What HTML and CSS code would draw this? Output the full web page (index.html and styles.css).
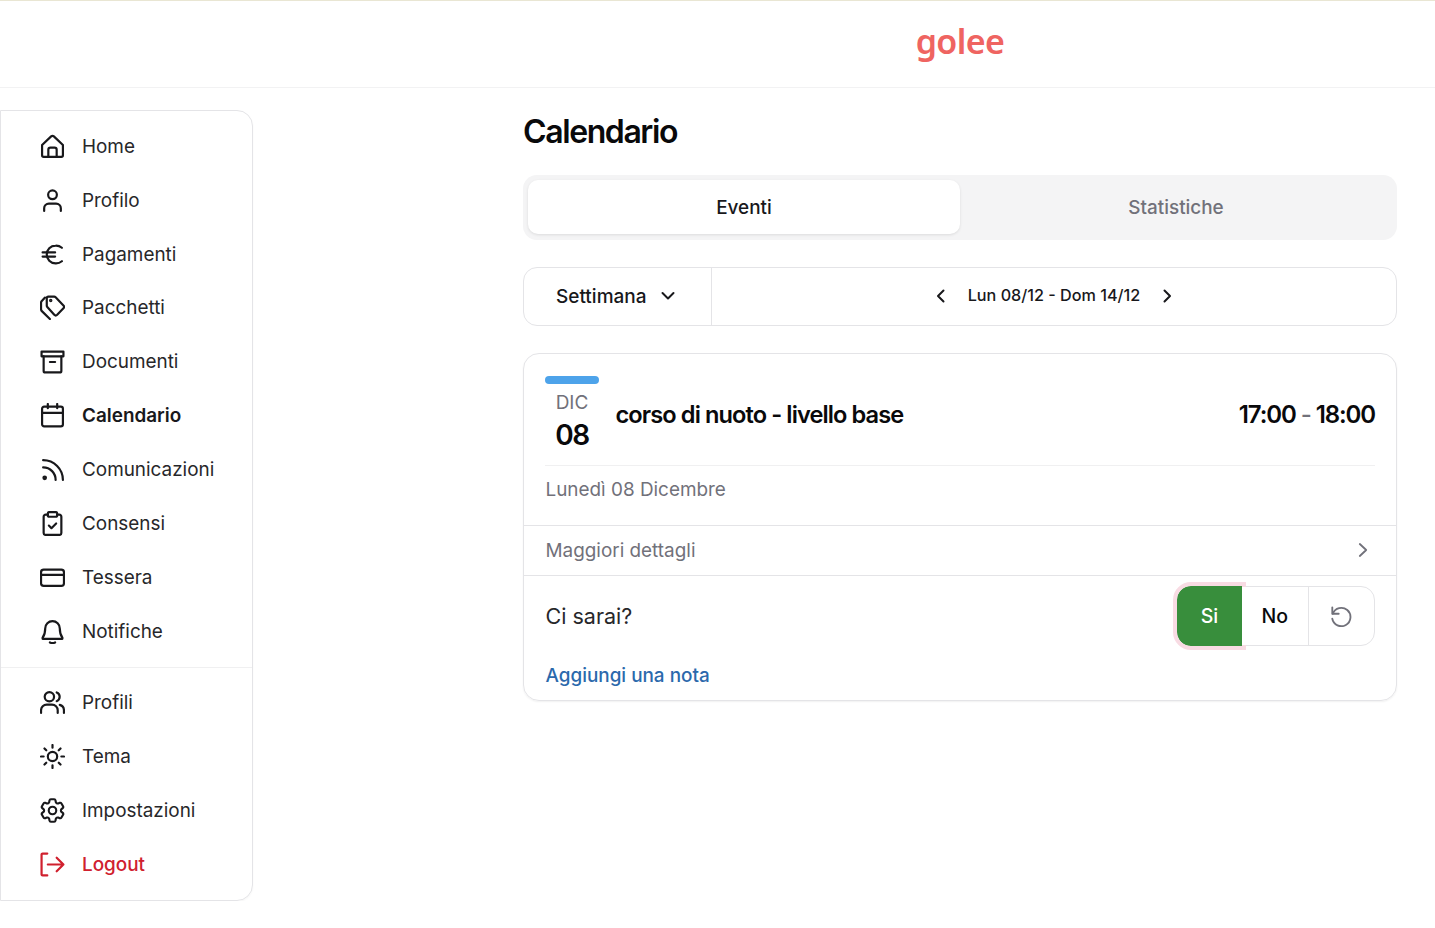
FILE: index.html
```html
<!DOCTYPE html>
<html lang="en">
<head>
    <meta charset="UTF-8">
    <meta name="viewport" content="width=device-width, initial-scale=1.0">
    <title>Calendario</title>
    <link rel="stylesheet" href="styles.css">
</head>
<body>
  <header class="topbar">
    <span class="logo">golee</span>
  </header>

  <div class="layout">
    <nav class="sidebar">
      <ul class="nav-group">
        <li class="nav-item">
          <svg class="nav-icon" viewBox="0 0 24 24"><path d="M2 10.500 10.700 2.300a2 2 0 0 1 2.600 0L22 10.500v10a1.500 1.500 0 0 1-1.500 1.500h-17A1.500 1.500 0 0 1 2 20.500z"/><path d="M8 22v-7a2 2 0 0 1 2-2h4a2 2 0 0 1 2 2v7"/></svg>
          Home
        </li>
        <li class="nav-item">
          <svg class="nav-icon" viewBox="0 0 24 24"><circle cx="12" cy="6.500" r="4.200"/><path d="M4 22v-2.500A4.500 4.500 0 0 1 8.500 15h7a4.500 4.500 0 0 1 4.500 4.500V22"/></svg>
          Profilo
        </li>
        <li class="nav-item">
          <svg class="nav-icon" viewBox="0 0 24 24"><path d="M21 5.500A9 9 0 0 0 15 3.500C10 3.500 6.500 7.500 6.500 12s3.500 8.500 8.500 8.500a9 9 0 0 0 6-2"/><path d="M2.500 10h12M2.500 14h12"/></svg>
          Pagamenti
        </li>
        <li class="nav-item">
          <svg class="nav-icon" viewBox="0 0 24 24"><path d="M6.500 3A1.500 1.500 0 0 1 8 1.500h5.500a2 2 0 0 1 1.500.6l7.500 7.900a2 2 0 0 1 0 2.800l-6 6.200a2 2 0 0 1-2.800 0L7 11.500a2 2 0 0 1-.5-1.500z"/><path d="M4.800 2.500 1.500 6A2.500 2.500 0 0 0 1 8v5.500a3 3 0 0 0 .8 2L9.500 23"/><circle class="dot" cx="10.300" cy="5.300" r=".6"/></svg>
          Pacchetti
        </li>
        <li class="nav-item">
          <svg class="nav-icon" viewBox="0 0 24 24"><path d="M1.500 2.500h21v4.500h-21z"/><path d="M3.500 7v14a1.500 1.500 0 0 0 1.500 1.500h14a1.500 1.500 0 0 0 1.500-1.500V7"/><path d="M9.500 12.500h5"/></svg>
          Documenti
        </li>
        <li class="nav-item active">
          <svg class="nav-icon" viewBox="0 0 24 24"><rect x="2" y="3.500" width="20" height="19" rx="2"/><path d="M2 9.500h20M7.500 1v4M16.500 1v4"/></svg>
          Calendario
        </li>
        <li class="nav-item">
          <svg class="nav-icon" viewBox="0 0 24 24"><path d="M3 3c10.500 0 19 8.500 19 19"/><path d="M3 10c7 0 12 5.500 12 12"/><circle cx="4.500" cy="20" r="1.200"/></svg>
          Comunicazioni
        </li>
        <li class="nav-item">
          <svg class="nav-icon" viewBox="0 0 24 24"><path d="M7.500 3.500h-2a2 2 0 0 0-2 2V21a2 2 0 0 0 2 2h13a2 2 0 0 0 2-2V5.500a2 2 0 0 0-2-2h-2"/><rect x="7.500" y="1" width="9" height="4.500" rx="1.500"/><path d="m8.500 14 2.500 2.500 4.500-4.500"/></svg>
          Consensi
        </li>
        <li class="nav-item">
          <svg class="nav-icon" viewBox="0 0 24 24"><rect x="1" y="4.500" width="22" height="15.500" rx="2.500"/><path d="M1 9.500h22"/></svg>
          Tessera
        </li>
        <li class="nav-item">
          <svg class="nav-icon" viewBox="0 0 24 24"><path d="M5 9a7 7 0 0 1 14 0c0 5 1 7 2.500 9v1h-19v-1C4 16 5 14 5 9z"/><path d="M9.500 22.500c1.500.8 3.500.8 5 0"/></svg>
          Notifiche
        </li>
      </ul>
      <ul class="nav-group nav-bottom">
        <li class="nav-item">
          <svg class="nav-icon" viewBox="0 0 24 24"><circle cx="9" cy="6.500" r="4.500"/><path d="M1 22v-2.500A5.500 5.500 0 0 1 6.500 14h5a5.500 5.500 0 0 1 5.500 5.500V22"/><path d="M16 2.300a4.500 4.500 0 0 1 0 8.400"/><path d="M19 14.300a5.500 5.500 0 0 1 4 5.200V22"/></svg>
          Profili
        </li>
        <li class="nav-item">
          <svg class="nav-icon" viewBox="0 0 24 24"><circle cx="12" cy="12" r="4.500"/><path d="M12 1v2.500M12 20.500V23M1 12h2.500M20.500 12H23M4.300 4.300 6 6M18 18l1.700 1.700M4.300 19.700 6 18M18 6l1.700-1.700"/></svg>
          Tema
        </li>
        <li class="nav-item">
          <svg class="nav-icon gear" viewBox="2 2 20 20"><path d="M9.594 3.940c.09-.542.56-.94 1.110-.94h2.593c.55 0 1.020.398 1.110.94l.213 1.281c.063.374.313.686.645.870.074.04.147.083.22.127.325.196.72.257 1.075.124l1.217-.456a1.125 1.125 0 0 1 1.370.49l1.296 2.247a1.125 1.125 0 0 1-.26 1.431l-1.003.827c-.293.241-.438.613-.43.992a7.723 7.723 0 0 1 0 .255c-.008.378.137.75.43.991l1.004.827c.424.35.534.955.26 1.430l-1.298 2.247a1.125 1.125 0 0 1-1.369.491l-1.217-.456c-.355-.133-.75-.072-1.076.124a6.470 6.470 0 0 1-.22.128c-.331.183-.581.495-.644.869l-.213 1.281c-.09.543-.56.94-1.110.94h-2.594c-.55 0-1.019-.398-1.110-.94l-.213-1.281c-.062-.374-.312-.686-.644-.87a6.520 6.520 0 0 1-.22-.127c-.325-.196-.72-.257-1.076-.124l-1.217.456a1.125 1.125 0 0 1-1.369-.49l-1.297-2.247a1.125 1.125 0 0 1 .26-1.431l1.004-.827c.292-.24.437-.613.43-.991a6.932 6.932 0 0 1 0-.255c.007-.38-.138-.751-.43-.992l-1.004-.827a1.125 1.125 0 0 1-.26-1.430l1.297-2.247a1.125 1.125 0 0 1 1.370-.491l1.216.456c.356.133.751.072 1.076-.124.072-.044.146-.086.22-.128.332-.183.582-.495.644-.869l.214-1.280z"/><circle cx="12" cy="12" r="3"/></svg>
          Impostazioni
        </li>
        <li class="nav-item logout">
          <svg class="nav-icon" viewBox="0 0 24 24"><path d="M7 1.500H2.500a1 1 0 0 0-1 1v19a1 1 0 0 0 1 1H7"/><path d="M7.500 12h15M16 5.500l6.500 6.500-6.500 6.500"/></svg>
          Logout
        </li>
      </ul>
    </nav>

    <main class="content">
      <h1 class="page-title">Calendario</h1>

      <div class="tabs">
        <div class="tab selected">Eventi</div>
        <div class="tab">Statistiche</div>
      </div>

      <div class="week-bar">
        <div class="range-select">
          Settimana
          <svg class="chev" viewBox="0 0 16 16"><path d="m2.500 5 5.500 5.500L13.500 5"/></svg>
        </div>
        <div class="week-nav">
          <svg class="chev" viewBox="0 0 16 16"><path d="M10.500 2.500 5 8l5.500 5.500"/></svg>
          <span class="week-label">Lun 08/12 - Dom 14/12</span>
          <svg class="chev" viewBox="0 0 16 16"><path d="M5.500 2.500 11 8l-5.500 5.500"/></svg>
        </div>
      </div>

      <section class="event-card">
        <div class="event-top">
          <div class="event-row">
            <div class="event-date">
              <div class="date-bar"></div>
              <div class="date-month">DIC</div>
              <div class="date-day">08</div>
            </div>
            <div class="event-title">corso di nuoto - livello base</div>
            <div class="event-time">17:00 <span class="time-sep">-</span> 18:00</div>
          </div>
          <div class="event-day">Lunedì 08 Dicembre</div>
        </div>
        <div class="event-details">
          Maggiori dettagli
          <svg class="details-chev" viewBox="0 0 16 16"><path d="M5.800 2 12.200 8l-6.400 6"/></svg>
        </div>
        <div class="event-answer">
          <span class="answer-label">Ci sarai?</span>
          <div class="answer-group">
            <div class="answer-btn yes">Si</div>
            <div class="answer-btn no">No</div>
            <div class="answer-btn reset">
              <svg class="reset-icon" viewBox="0 0 24 24"><path d="M2.500 2.500v7h7"/><path d="M3 9.500A10 10 0 1 1 2.500 15"/></svg>
            </div>
          </div>
        </div>
        <div class="add-note">Aggiungi una nota</div>
      </section>
    </main>
  </div>
</body>
</html>
```
FILE: styles.css
```css
*{
    box-sizing: border-box;
}

body{
    margin: 0;
    font-family: Inter, "Liberation Sans", sans-serif;
    background-color: #fff;
    color: #18181b;
}

.topbar{
    height: 88px;
    border-top: 1px solid #e9e6d3;
    border-bottom: 1px solid #f2f2f3;
    padding-left: 523px;
    padding-right: 38px;
    display: flex;
    justify-content: center;
    align-items: center;
}

.logo{
    font-family: "Noto Sans", Lato, sans-serif;
    font-size: 34px;
    font-weight: 600;
    letter-spacing: -0.6px;
    color: #ef6461;
    margin-top: -7px;
}

.layout{
    display: flex;
    align-items: flex-start;
    padding-top: 22px;
}

.sidebar{
    width: 253px;
    flex-shrink: 0;
    height: 791px;
    border: 1px solid #e4e4e7;
    border-radius: 0 16px 16px 0;
    box-shadow: 0 1px 2px rgba(0,0,0,0.04);
}

.nav-group{
    list-style: none;
    margin: 0;
    padding: 8.3px 0 8.7px;
}

.nav-bottom{
    padding-top: 8px;
    border-top: 1px solid #f0f0f1;
}

.nav-item{
    height: 53.9px;
    padding-left: 39px;
    display: flex;
    align-items: center;
    gap: 17px;
    font-size: 18.9px;
    color: #27272a;
}

.nav-icon{
    width: 25px;
    height: 25px;
    flex-shrink: 0;
    fill: none;
    stroke: #18181b;
    stroke-width: 2.1;
    stroke-linecap: round;
    stroke-linejoin: round;
}

.gear{
    stroke-width: 1.7;
}

.dot{
    fill: #18181b;
}

.active{
    font-weight: 600;
    color: #18181b;
}

.logout{
    color: #d0202e;
    font-weight: 500;
}

.logout .nav-icon{
    stroke: #d0202e;
}

.content{
    flex: 1;
    padding-left: 270px;
    padding-right: 38px;
}

.page-title{
    margin: 0 0 21px;
    font-size: 32px;
    line-height: 44px;
    font-weight: 600;
    letter-spacing: -1.4px;
    color: #09090b;
}

.tabs{
    display: flex;
    height: 65px;
    padding: 5px 5px 6px;
    background-color: #f4f4f5;
    border-radius: 14px;
}

.tab{
    flex: 1;
    display: flex;
    align-items: center;
    justify-content: center;
    font-size: 18.9px;
    color: #71717a;
    font-weight: 500;
}

.selected{
    background: #fff;
    color: #18181b;
    border-radius: 10px;
    box-shadow: 0 1px 3px rgba(0,0,0,0.1);
}

.week-bar{
    display: flex;
    height: 59px;
    margin-top: 27px;
    border: 1px solid #e4e4e7;
    border-radius: 14px;
}

.range-select{
    width: 188px;
    border-right: 1px solid #e4e4e7;
    padding-left: 32px;
    padding-bottom: 1px;
    display: flex;
    align-items: center;
    gap: 13px;
    font-size: 19px;
    font-weight: 500;
}

.week-nav{
    flex: 1;
    display: flex;
    align-items: center;
    justify-content: center;
    gap: 19px;
    padding-bottom: 2px;
}

.week-label{
    margin-bottom: 2px;
    font-size: 16.2px;
    font-weight: 500;
}

.chev{
    width: 16px;
    height: 16px;
    fill: none;
    stroke: #18181b;
    stroke-width: 2;
    stroke-linecap: round;
    stroke-linejoin: round;
}

.event-card{
    margin-top: 27px;
    border: 1px solid #e4e4e7;
    border-radius: 16px;
    box-shadow: 0 1px 2px rgba(0,0,0,0.06);
    height: 348px;
}

.event-top{
    padding: 22px 21px 0;
}

.event-row{
    display: flex;
    align-items: center;
    height: 90px;
    border-bottom: 1px solid #f0f0f1;
}

.event-date{
    width: 54px;
    text-align: center;
    margin-right: 16.5px;
    align-self: flex-start;
}

.date-bar{
    height: 8px;
    border-radius: 4px;
    background-color: #4da3ea;
}

.date-month{
    margin-top: 6px;
    font-size: 19px;
    line-height: 26px;
    color: #71717a;
}

.date-day{
    font-size: 28px;
    line-height: 38px;
    font-weight: 600;
    letter-spacing: -1.4px;
    color: #09090b;
}

.event-title{
    flex: 1;
    padding-bottom: 12px;
    font-size: 23.6px;
    font-weight: 600;
    letter-spacing: -0.9px;
    color: #09090b;
}

.event-time{
    padding-bottom: 13px;
    font-size: 24px;
    font-weight: 600;
    letter-spacing: -1.1px;
    color: #09090b;
}

.time-sep{
    color: #71717a;
    font-weight: 500;
}

.event-day{
    height: 59px;
    padding: 12px 0 0 .5px;
    font-size: 18.9px;
    color: #71717a;
}

.event-details{
    height: 51px;
    padding: 0 26px 0 21.5px;
    border-top: 1px solid #e4e4e7;
    border-bottom: 1px solid #e4e4e7;
    display: flex;
    align-items: center;
    justify-content: space-between;
    font-size: 18.9px;
    color: #71717a;
}

.details-chev{
    width: 16px;
    height: 16px;
    margin-top: -1px;
    fill: none;
    stroke: #71717a;
    stroke-width: 1.8;
    stroke-linecap: round;
    stroke-linejoin: round;
}

.event-answer{
    height: 80px;
    padding: 10px 21px 10px 21.5px;
    display: flex;
    justify-content: space-between;
    align-items: flex-start;
}

.answer-label{
    font-size: 21.5px;
    line-height: 61px;
    color: #27272a;
}

.answer-group{
    display: flex;
    height: 60px;
    width: 198px;
    border: 1px solid #e4e4e7;
    border-radius: 14px;
}

.answer-btn{
    flex: 1;
    display: flex;
    align-items: center;
    justify-content: center;
    font-size: 19.5px;
    font-weight: 500;
}

.yes{
    background-color: #388e3c;
    color: #fff;
    border-radius: 14px 0 0 14px;
    margin: -1px 0 -1px -1px;
    outline: 4px solid #f8dbe3;
    flex: none;
    width: 65px;
}

.no{
    border-right: 1px solid #e4e4e7;
    color: #09090b;
    position: relative;
    background: #fff;
}

.reset-icon{
    width: 22px;
    height: 22px;
    margin-top: -1px;
    fill: none;
    stroke: #71717a;
    stroke-width: 2;
    stroke-linecap: round;
    stroke-linejoin: round;
}

.add-note{
    padding-left: 21.5px;
    margin-top: 8px;
    font-size: 18.9px;
    font-weight: 500;
    color: #2b69ac;
}
```
